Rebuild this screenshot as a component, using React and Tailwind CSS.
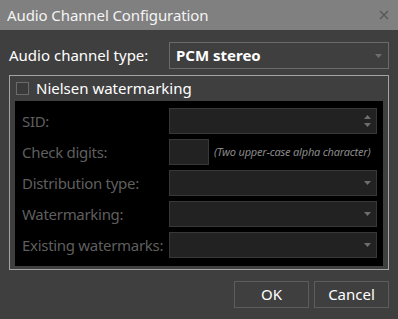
const font = { fontFamily: '"Noto Sans", "Open Sans", sans-serif' };

function Caret() {
  return (
    <svg width="7" height="4" viewBox="0 0 7 4" className="shrink-0">
      <path d="M0 0 H7 L3.5 4 Z" fill="#6e6e6e" />
    </svg>
  );
}

function Field({ label, children }) {
  return (
    <div className="flex items-center h-[26px]">
      <div className="w-[147px] shrink-0 whitespace-nowrap text-[15px] text-[#5f5f5f] leading-none tracking-[-0.3px]">{label}</div>
      {children}
    </div>
  );
}

function DisabledSelect() {
  return (
    <div className="flex-1 h-full bg-[#222222] border border-[#383838] flex items-center justify-end pr-[5px]">
      <Caret />
    </div>
  );
}

export default function App() {
  return (
    <div className="w-[398px] h-[319px] bg-[#3f3f3f] flex flex-col" style={font}>
      {/* title bar */}
      <div className="h-[30px] bg-[#808080] flex items-center justify-between pl-[7px] pr-[9px] shrink-0">
        <span className="text-[15px] text-[#f4f4f4] tracking-[-0.1px]">Audio Channel Configuration</span>
        <svg width="10" height="10" viewBox="0 0 10 10">
          <path d="M1 1 L9 9 M9 1 L1 9" stroke="#5a5a5a" strokeWidth="1.6" />
        </svg>
      </div>

      <div className="flex flex-col px-[9px]">
        {/* channel type */}
        <div className="flex items-center mt-[12px] h-[27px]">
          <div className="w-[160px] text-[15px] text-white">Audio channel type:</div>
          <div className="flex-1 h-full border border-[#6a6a6a] flex items-center justify-between pl-[6px] pr-[6px]">
            <span className="text-[15px] font-bold text-white">PCM stereo</span>
            <Caret />
          </div>
        </div>

        {/* group box */}
        <div className="mt-[6px] border border-[#a3a3a3] flex flex-col pb-[3px]">
          <div className="h-[25px] flex items-center pl-[6px] gap-[7px]">
            <div className="w-[13px] h-[13px] border border-[#6a6a6a] bg-[#3a3a3a]" />
            <span className="text-[15px] text-white">Nielsen watermarking</span>
          </div>
          <div className="mx-[5px] bg-black flex flex-col gap-[5px] pt-[7px] pb-[8px] pl-[7px] pr-[6px]">
            <Field label="SID:">
              <div className="flex-1 h-full bg-[#222222] border border-[#383838] flex items-center justify-end pr-[5px]">
                <svg width="7" height="12" viewBox="0 0 7 12">
                  <path d="M0 4 L3.5 0 L7 4 Z M0 8 H7 L3.5 12 Z" fill="#6e6e6e" />
                </svg>
              </div>
            </Field>
            <Field label="Check digits:">
              <div className="w-[40px] h-full bg-[#222222] border border-[#383838]" />
              <span className="ml-[5px] text-[11px] italic text-[#8a8a8a] tracking-[-0.2px]">(Two upper-case alpha character)</span>
            </Field>
            <Field label="Distribution type:">
              <DisabledSelect />
            </Field>
            <Field label="Watermarking:">
              <DisabledSelect />
            </Field>
            <Field label="Existing watermarks:">
              <DisabledSelect />
            </Field>
          </div>
        </div>

        {/* buttons */}
        <div className="flex justify-end gap-[5px] mt-[11px]">
          <button className="w-[75px] h-[27px] border border-[#5c5c5c] text-[15px] text-white">OK</button>
          <button className="w-[75px] h-[27px] border border-[#5c5c5c] text-[15px] text-white">Cancel</button>
        </div>
      </div>
    </div>
  );
}
